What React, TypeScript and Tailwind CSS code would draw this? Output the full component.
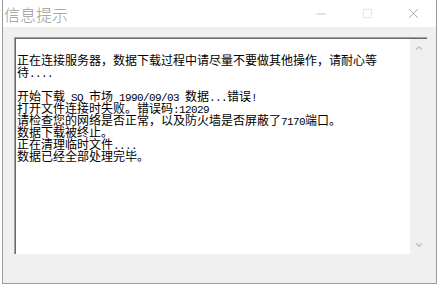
import { ChevronUp, ChevronDown, Minus, Square, X } from "lucide-react";

const mono = "font-['Liberation_Mono',monospace] text-[11px] leading-[0px] tracking-[-0.6px]";

export default function App() {
  return (
    <div className="relative h-[287px] w-[440px] overflow-hidden bg-white font-['Noto_Sans_CJK_SC',sans-serif]">
      <div className="ml-[2px] flex h-[284px] w-[435px] flex-col border-x border-b border-[#9a9a9a] bg-[#f0f0f0]">
        {/* title bar */}
        <div className="flex h-[27px] shrink-0 items-center bg-white">
          <span className="pl-[1px] text-[16px] font-light leading-none text-[#9a9a9a]">信息提示</span>
          <div className="ml-auto flex items-center">
            <div className="flex w-[46px] justify-center">
              <Minus className="h-[14px] w-[14px] text-[#9a9a9a]" strokeWidth={1} />
            </div>
            <div className="flex w-[46px] justify-center">
              <Square className="h-[11px] w-[11px] text-[#d0d0d0]" strokeWidth={1.2} />
            </div>
            <div className="flex w-[46px] justify-center">
              <X className="h-[17px] w-[17px] text-[#8a8a8a]" strokeWidth={1} />
            </div>
          </div>
        </div>

        {/* body */}
        <div className="pl-[11px] pt-[10px]">
          <div className="h-[217px] w-[413px] border-l border-t border-[#a0a0a0] border-b-white border-r-white">
            <div className="flex h-full border-l border-t border-[#6a6a6a] border-b-[#e3e3e3] border-r-[#e3e3e3] bg-white">
              <div className="flex-1 pl-[1px] pt-[15px] text-[12px] leading-[12px] text-black">
                <p className="w-[366px]">
                  正在连接服务器，数据下载过程中请尽量不要做其他操作，请耐心等待<span className={mono}>....</span>
                </p>
                <p className="h-[12px]" />
                <p>
                  开始下载<span className={mono}> SQ </span>市场<span className={mono}> 1990/09/03 </span>数据<span className={mono}>...</span>错误<span className={mono}>!</span>
                </p>
                <p>
                  打开文件连接时失败。错误码<span className={mono}>:12029</span>
                </p>
                <p>
                  请检查您的网络是否正常，以及防火墙是否屏蔽了<span className={mono}>7170</span>端口。
                </p>
                <p>数据下载被终止。</p>
                <p>
                  正在清理临时文件<span className={mono}>....</span>
                </p>
                <p>数据已经全部处理完毕。</p>
              </div>
              <div className="flex w-[17px] flex-col items-center justify-between bg-[#f0f0f0] py-[4px]">
                <ChevronUp className="h-[10px] w-[10px] text-[#c0c0c0]" strokeWidth={3} />
                <ChevronDown className="h-[10px] w-[10px] text-[#c0c0c0]" strokeWidth={3} />
              </div>
            </div>
          </div>
        </div>
      </div>
    </div>
  );
}
